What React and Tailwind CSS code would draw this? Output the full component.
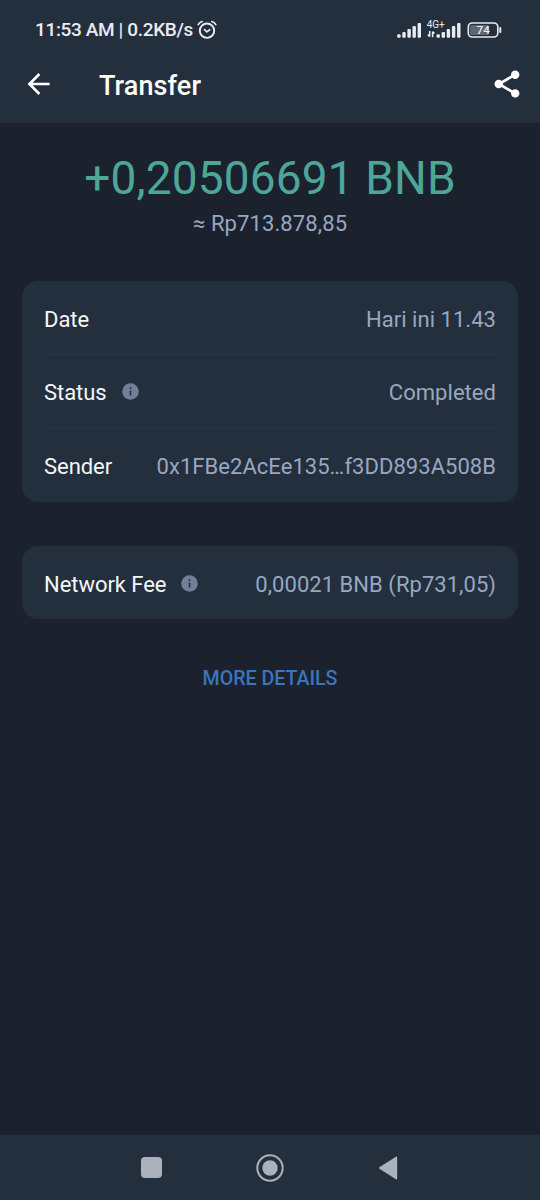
const DETAILS = [
  { label: 'Date', value: 'Hari ini 11.43' },
  { label: 'Status', value: 'Completed', info: true },
  { label: 'Sender', value: '0x1FBe2AcEe135…f3DD893A508B' },
]

const FEES = [{ label: 'Network Fee', value: '0,00021 BNB (Rp731,05)', info: true }]

function AlarmIcon() {
  return (
    <svg className="w-5 h-5" viewBox="0 0 20 20" fill="none" stroke="currentColor" strokeWidth="1.9" strokeLinecap="round">
      <circle cx="10" cy="10.7" r="7.2" />
      <path d="M7.4 9.5 9.8 11.9 12.7 9.7" strokeWidth="1.7" strokeLinejoin="round" />
      <path d="M1.2 4.6Q2.6 2.4 5.2 1.5M18.8 4.6Q17.4 2.4 14.8 1.5" strokeWidth="1.7" />
    </svg>
  )
}

function SignalIcons() {
  return (
    <svg className="w-[66px] h-6 shrink-0" viewBox="0 0 66 24" fill="currentColor">
      <rect x="0.2" y="16.2" width="3.4" height="3.6" rx="1" />
      <rect x="5.3" y="14" width="3.4" height="5.8" rx="1" />
      <rect x="10.4" y="11" width="3.4" height="8.8" rx="1" />
      <rect x="15.5" y="8" width="3.4" height="11.8" rx="1" />
      <rect x="20.6" y="5" width="3.4" height="14.8" rx="1" />
      <text x="29.7" y="10.2" fontSize="10.5" fontFamily="Roboto, sans-serif" textLength="18" lengthAdjust="spacingAndGlyphs">4G+</text>
      <path d="M32.7 13v5.5M30.8 16.6l1.9 2.1M35.6 19.2v-5.5M37.4 15.6l-1.8-2.1" fill="none" stroke="currentColor" strokeWidth="1.5" />
      <rect x="39.5" y="16.2" width="3.4" height="3.6" rx="1" />
      <rect x="44.6" y="14" width="3.4" height="5.8" rx="1" />
      <rect x="49.7" y="11" width="3.4" height="8.8" rx="1" />
      <rect x="54.9" y="8" width="3.4" height="11.8" rx="1" />
      <rect x="60.1" y="5" width="3.4" height="14.8" rx="1" />
    </svg>
  )
}

function BatteryIcon() {
  return (
    <svg className="w-9 h-4 shrink-0" viewBox="0 0 36 16">
      <rect x="3" y="3" width="19" height="10" rx="2" fill="#5b6672" />
      <rect x="1.3" y="1" width="29.5" height="14" rx="4" fill="none" stroke="currentColor" strokeWidth="1.6" />
      <path d="M33.3 6v4" stroke="currentColor" strokeWidth="2" strokeLinecap="round" />
      <text x="16.2" y="12.2" fontSize="11.8" fontWeight="500" fontFamily="Roboto, sans-serif" textAnchor="middle" fill="currentColor">74</text>
    </svg>
  )
}

function BackIcon() {
  return (
    <svg className="w-6 h-6" viewBox="0 0 24 24" fill="none" stroke="currentColor" strokeWidth="2.6">
      <path d="M23.6 12H3.6M13.4 2 3.4 12l10 10" />
    </svg>
  )
}

function ShareIcon() {
  return (
    <svg className="w-7 h-7" viewBox="0 0 28 28" fill="currentColor">
      <path d="M22.2 4.6 6 14l16.2 9.5" fill="none" stroke="currentColor" strokeWidth="2.7" />
      <circle cx="22.2" cy="4.7" r="4.2" />
      <circle cx="5.7" cy="14" r="4.2" />
      <circle cx="22.2" cy="23.4" r="4.2" />
    </svg>
  )
}

function InfoIcon() {
  return (
    <svg className="w-[17px] h-[17px] mb-[3px]" viewBox="0 0 17 17">
      <circle cx="8.5" cy="8.5" r="8.3" fill="#718096" />
      <path d="M8.5 7.6v5M8.5 4.3v1.7" stroke="#242f3d" strokeWidth="1.6" />
    </svg>
  )
}

function StatusBar() {
  return (
    <div className="flex items-center h-[60px] pl-[35px] pr-[37px] text-[#e8ecf1]">
      <span className="w-[158px] pt-px text-[19px] font-medium whitespace-nowrap tracking-[-0.36px]">11:53 AM | 0.2KB/s</span>
      <span className="ml-1 mb-px"><AlarmIcon /></span>
      <div className="ml-auto flex items-center gap-1">
        <SignalIcons />
        <BatteryIcon />
      </div>
    </div>
  )
}

function Card({ rows }) {
  return (
    <section className="rounded-2xl bg-[#242f3d] px-[22px]">
      {rows.map((row, i) => (
        <div
          key={row.label}
          className={`flex items-center justify-between h-[73.6px] pt-[4.6px] text-[22px] leading-7 ${i < rows.length - 1 ? 'border-b border-[#2b3645]' : ''}`}
        >
          <div className="flex items-center gap-[15px] text-[#f4f7fa]">
            <span className="tracking-[-0.05px]">{row.label}</span>
            {row.info && <InfoIcon />}
          </div>
          <span className="text-[#98a7c0] whitespace-nowrap tracking-[0.04px]">{row.value}</span>
        </div>
      ))}
    </section>
  )
}

function NavBar() {
  return (
    <nav className="h-[65px] bg-[#242f3d] flex items-center justify-between pl-[141px] pr-[142px] text-[#abb1ba]">
      <div className="w-[21px] h-[21px] rounded bg-current" />
      <svg className="w-7 h-7" viewBox="0 0 28 28">
        <circle cx="14" cy="14" r="12.7" fill="none" stroke="currentColor" strokeWidth="2" />
        <circle cx="14" cy="14" r="7.7" fill="currentColor" />
      </svg>
      <svg className="w-5 h-6" viewBox="0 0 20 24" fill="currentColor" stroke="currentColor" strokeWidth="1.6" strokeLinejoin="round">
        <path d="M1.8 12 18.4 1.4v21.2z" />
      </svg>
    </nav>
  )
}

export default function App() {
  return (
    <div className="flex flex-col w-[540px] h-[1200px] overflow-hidden bg-[#1b222d] font-['Roboto',sans-serif]">
      <header className="h-[123px] bg-[#242f3d] text-white">
        <StatusBar />
        <div className="flex items-center h-12 pl-[26px] pr-[19px]">
          <BackIcon />
          <h1 className="ml-[49px] pt-1 text-[27px] leading-8 font-medium tracking-[0.1px]">Transfer</h1>
          <span className="ml-auto"><ShareIcon /></span>
        </div>
      </header>
      <main className="flex-1 px-[22px]">
        <div className="pt-[27px] text-center">
          <div className="text-[46px] leading-[56px] tracking-[0.15px] text-[#4ca799]">+0,20506691 BNB</div>
          <div className="text-[22px] leading-[36px] tracking-[0.1px] text-[#98a7c0]">≈ Rp713.878,85</div>
        </div>
        <div className="mt-[39px] flex flex-col gap-11">
          <Card rows={DETAILS} />
          <Card rows={FEES} />
        </div>
        <button className="block mx-auto mt-[46px] text-[19.6px] leading-7 font-medium text-[#3c74bd]">MORE DETAILS</button>
      </main>
      <NavBar />
    </div>
  )
}
